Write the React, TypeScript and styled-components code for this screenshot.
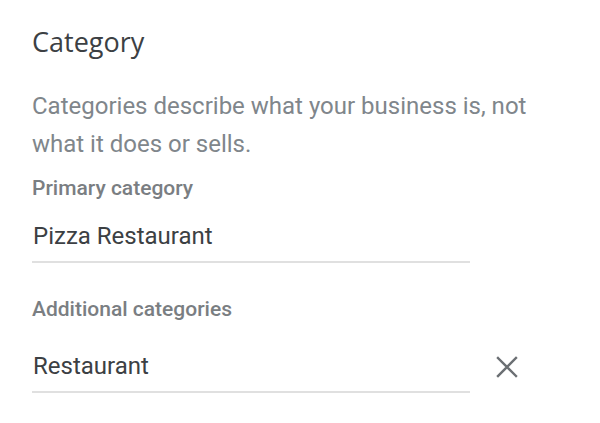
import React from "react";
import styled, { createGlobalStyle } from "styled-components";

const GlobalStyle = createGlobalStyle`
  html, body {
    margin: 0;
    padding: 0;
    background: #fff;
  }

  body {
    font-family: Roboto, "Liberation Sans", Arial, sans-serif;
  }
`;

const Panel = styled.section`
  display: flex;
  flex-direction: column;

  width: 600px;
  height: 423px;
  padding: 26px 0 0 32px;
  box-sizing: border-box;
`;

const Title = styled.h2`
  margin: 0;

  font-family: "Open Sans", Roboto, sans-serif;
  font-size: 27px;
  font-weight: 400;
  line-height: 32px;
  color: #3c4043;
`;

const Description = styled.p`
  margin: 29px 0 0;
  width: 520px;

  font-size: 24px;
  line-height: 38px;
  color: #80868b;
`;

const FieldLabel = styled.div<{ gap: number }>`
  margin-top: ${({ gap }) => gap}px;

  font-size: 21px;
  font-weight: 500;
  line-height: 26px;
  color: #7a7e82;
`;

const FieldRow = styled.div<{ offset?: number }>`
  display: flex;
  align-items: flex-start;
  gap: 23px;

  margin-top: ${({ offset = 0 }) => offset}px;
`;

const FieldInput = styled.div`
  width: 438px;
  padding: 20px 0 10px 1px;
  box-sizing: border-box;

  border-bottom: 2px solid #e0e0e0;

  font-size: 24px;
  line-height: 30px;
  color: #3c4043;
`;

const RemoveButton = styled.button`
  display: flex;
  align-items: center;
  justify-content: center;

  width: 28px;
  height: 28px;
  margin-top: 22px;
  padding: 0;

  border: none;
  background: transparent;
  color: #6b6f73;
  cursor: pointer;
`;

const CloseIcon = () => (
  <svg width="22" height="22" viewBox="0 0 22 22" fill="none">
    <path
      d="M2 2L20 20M20 2L2 20"
      stroke="currentColor"
      strokeWidth="2.4"
      strokeLinecap="square"
    />
  </svg>
);

export default function App() {
  return (
    <>
      <GlobalStyle />
      <Panel>
        <Title>Category</Title>
        <Description>
          Categories describe what your business is, not what it does or sells.
        </Description>
        <FieldLabel gap={12}>Primary category</FieldLabel>
        <FieldRow>
          <FieldInput>Pizza Restaurant</FieldInput>
        </FieldRow>
        <FieldLabel gap={33}>Additional categories</FieldLabel>
        <FieldRow offset={9}>
          <FieldInput>Restaurant</FieldInput>
          <RemoveButton aria-label="Remove category">
            <CloseIcon />
          </RemoveButton>
        </FieldRow>
      </Panel>
    </>
  );
}
